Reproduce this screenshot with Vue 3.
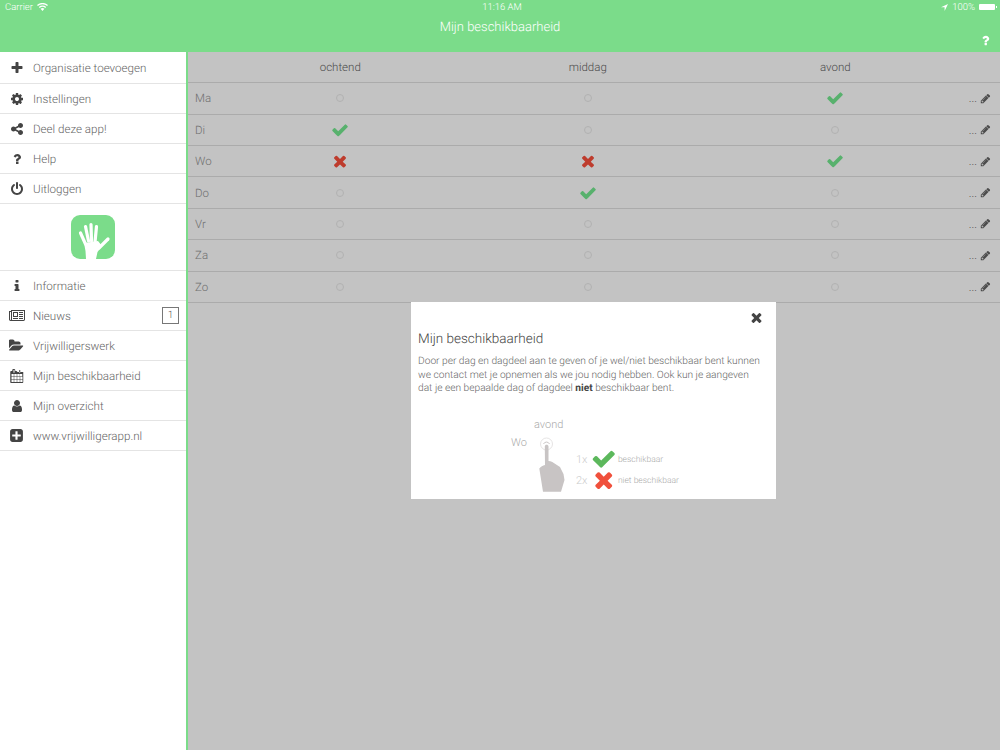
<script setup>
const d = {
  plus: 'M1600 736v192q0 40-28 68t-68 28h-416v416q0 40-28 68t-68 28h-192q-40 0-68-28t-28-68v-416h-416q-40 0-68-28t-28-68v-192q0-40 28-68t68-28h416v-416q0-40 28-68t68-28h192q40 0 68 28t28 68v416h416q40 0 68 28t28 68z',
  cog: 'M1152 896q0-106-75-181t-181-75-181 75-75 181 75 181 181 75 181-75 75-181zm512-109v222q0 12-8 23t-20 13l-185 28q-19 54-39 91 35 50 107 138 10 12 10 25t-9 23q-27 37-99 108t-94 71q-12 0-26-9l-138-108q-44 23-91 38-16 136-29 186-7 28-36 28h-222q-14 0-24.5-8.5t-11.5-21.5l-28-184q-49-16-90-37l-141 107q-10 9-25 9-14 0-25-11-126-114-165-168-7-10-7-23 0-12 8-23 15-21 51-66.5t54-70.5q-27-50-41-99l-183-27q-13-2-21-12.5t-8-23.5v-222q0-12 8-23t19-13l186-28q14-46 39-92-40-57-107-138-10-12-10-24 0-10 9-23 26-36 98.5-107.5t94.5-71.5q13 0 26 10l138 107q44-23 91-38 16-136 29-186 7-28 36-28h222q14 0 24.5 8.5t11.5 21.5l28 184q49 16 90 37l142-107q9-9 24-9 13 0 25 10 129 119 165 170 7 8 7 22 0 12-8 23-15 21-51 66.5t-54 70.5q26 50 41 98l183 28q13 2 21 12.5t8 23.5z',
  share: 'M1344 1024q133 0 226.5 93.5t93.5 226.5-93.5 226.5-226.5 93.5-226.5-93.5-93.5-226.5q0-12 2-34l-360-180q-92 86-218 86-133 0-226.5-93.5t-93.5-226.5 93.5-226.5 226.5-93.5q126 0 218 86l360-180q-2-22-2-34 0-133 93.5-226.5t226.5-93.5 226.5 93.5 93.5 226.5-93.5 226.5-226.5 93.5q-126 0-218-86l-360 180q2 22 2 34t-2 34l360 180q92-86 218-86z',
  question: 'M1088 1256v240q0 16-12 28t-28 12h-240q-16 0-28-12t-12-28v-240q0-16 12-28t28-12h240q16 0 28 12t12 28zm316-600q0 54-15.5 101t-35 76.5-55 59.5-57.5 43.5-61 35.5q-41 23-68.5 65t-27.5 67q0 17-12 32.5t-28 15.5h-240q-15 0-25.5-18.5t-10.5-37.5v-45q0-83 65-156.5t143-108.5q59-27 84-56t25-76q0-42-46.5-74t-107.5-32q-65 0-108 29-35 25-107 115-13 16-31 16-12 0-25-8l-164-125q-13-10-15.5-25t5.5-28q160-266 464-266 80 0 161 31t146 83 106 127.5 41 158.5z',
  power: 'M1664 896q0 156-61 298t-164 245-245 164-298 61-298-61-245-164-164-245-61-298q0-182 80.5-343t226.5-270q43-32 95.5-25t83.5 50q32 42 24.5 94.5t-49.5 84.5q-98 74-151.5 181t-53.5 228q0 104 40.5 198.5t109.5 163.5 163.5 109.5 198.5 40.5 198.5-40.5 163.5-109.5 109.5-163.5 40.5-198.5q0-121-53.5-228t-151.5-181q-42-32-49.5-84.5t24.5-94.5q31-43 84-50t95 25q146 109 226.5 270t80.5 343zm-640-768v640q0 52-38 90t-90 38-90-38-38-90v-640q0-52 38-90t90-38 90 38 38 90z',
  info: 'M1216 1344v128q0 26-19 45t-45 19h-512q-26 0-45-19t-19-45v-128q0-26 19-45t45-19h64v-384h-64q-26 0-45-19t-19-45v-128q0-26 19-45t45-19h384q26 0 45 19t19 45v576h64q26 0 45 19t19 45zm-128-1152v192q0 26-19 45t-45 19h-256q-26 0-45-19t-19-45v-192q0-26 19-45t45-19h256q26 0 45 19t19 45z',
  news: 'M1024 512h-384v384h384v-384zm128 640v128h-640v-128h640zm0-768v640h-640v-640h640zm640 768v128h-512v-128h512zm0-256v128h-512v-128h512zm0-256v128h-512v-128h512zm0-256v128h-512v-128h512zm-1536 960v-960h-128v960q0 26 19 45t45 19 45-19 19-45zm1664 0v-1088h-1536v1088q0 33-11 64h1483q26 0 45-19t19-45zm128-1216v1216q0 80-56 136t-136 56h-1664q-80 0-136-56t-56-136v-1088h256v-128h1792z',
  folder: 'M1815 952q0 31-31 66l-336 396q-43 51-120.5 86.5t-143.5 35.5h-1088q-34 0-60.5-13t-26.5-43q0-31 31-66l336-396q43-51 120.5-86.5t143.5-35.5h1088q34 0 60.5 13t26.5 43zm-343-344v160h-832q-94 0-197 47.5t-164 119.5l-337 396-5 6q0-4-.5-12.5t-.5-12.5v-960q0-92 66-158t158-66h320q92 0 158 66t66 158v32h544q92 0 158 66t66 158z',
  calendar: 'M192 1664h288v-288h-288v288zm352 0h320v-288h-320v288zm-352-352h288v-320h-288v320zm352 0h320v-320h-320v320zm-352-384h288v-288h-288v288zm736 736h320v-288h-320v288zm-384-736h320v-288h-320v288zm768 736h288v-288h-288v288zm-384-352h320v-320h-320v320zm-352-864v-288q0-13-9.5-22.5t-22.5-9.5h-64q-13 0-22.5 9.5t-9.5 22.5v288q0 13 9.5 22.5t22.5 9.5h64q13 0 22.5-9.5t9.5-22.5zm736 864h288v-320h-288v320zm-384-384h320v-288h-320v288zm352 0h288v-288h-288v288zm32-480v-288q0-13-9.5-22.5t-22.5-9.5h-64q-13 0-22.5 9.5t-9.5 22.5v288q0 13 9.5 22.5t22.5 9.5h64q13 0 22.5-9.5t9.5-22.5zm384-64v1280q0 52-38 90t-90 38h-1408q-52 0-90-38t-38-90v-1280q0-52 38-90t90-38h128v-96q0-66 47-113t113-47h64q66 0 113 47t47 113v96h128q52 0 90 38t38 90z',
  user: 'M1536 1399q0 109-62.5 187t-150.5 78h-854q-88 0-150.5-78t-62.5-187q0-85 8.5-160.5t31.5-152 58.5-131 94-89 134.5-34.5q131 128 313 128t313-128q76 0 134.5 34.5t94 89 58.5 131 31.5 152 8.5 160.5zm-256-887q0 159-112.5 271.5t-271.5 112.5-271.5-112.5-112.5-271.5 112.5-271.5 271.5-112.5 271.5 112.5 112.5 271.5z',
  plusSquare: 'M1408 960v-128q0-26-19-45t-45-19h-320v-320q0-26-19-45t-45-19h-128q-26 0-45 19t-19 45v320h-320q-26 0-45 19t-19 45v128q0 26 19 45t45 19h320v320q0 26 19 45t45 19h128q26 0 45-19t19-45v-320h320q26 0 45-19t19-45zm256-544v960q0 119-84.5 203.5t-203.5 84.5h-960q-119 0-203.5-84.5t-84.5-203.5v-960q0-119 84.5-203.5t203.5-84.5h960q119 0 203.5 84.5t84.5 203.5z',
  check: 'M1671 566q0 40-28 68l-724 724-136 136q-28 28-68 28t-68-28l-136-136-362-362q-28-28-28-68t28-68l136-136q28-28 68-28t68 28l294 295 656-657q28-28 68-28t68 28l136 136q28 28 28 68z',
  times: 'M1490 1322q0 40-28 68l-136 136q-28 28-68 28t-68-28l-294-294-294 294q-28 28-68 28t-68-28l-136-136q-28-28-28-68t28-68l294-294-294-294q-28-28-28-68t28-68l136-136q28-28 68-28t68 28l294 294 294-294q28-28 68-28t68 28l136 136q28 28 28 68t-28 68l-294 294 294 294q28 28 28 68z',
  pencil: 'M491 1536l91-91-235-235-91 91v107h128v128h107zm523-928q0-22-22-22-10 0-17 7l-542 542q-7 7-7 17 0 22 22 22 10 0 17-7l542-542q7-7 7-17zm-54-192l416 416-832 832h-416v-416zm683 96q0 53-37 90l-166 166-416-416 166-165q36-38 90-38 53 0 91 38l235 234q37 39 37 91z'
}

const topMenu = [
  { label: 'Organisatie toevoegen', icon: 'plus', size: 14 },
  { label: 'Instellingen', icon: 'cog', size: 14 },
  { label: 'Deel deze app!', icon: 'share', size: 14 },
  { label: 'Help', icon: 'question', size: 14 },
  { label: 'Uitloggen', icon: 'power', size: 14 }
]

const bottomMenu = [
  { label: 'Informatie', icon: 'info', size: 14 },
  { label: 'Nieuws', icon: 'news', size: 16, vb: '0 0 2048 1792', badge: 1 },
  { label: 'Vrijwilligerswerk', icon: 'folder', size: 15, vb: '0 0 1920 1792' },
  { label: 'Mijn beschikbaarheid', icon: 'calendar', size: 14 },
  { label: 'Mijn overzicht', icon: 'user', size: 14 },
  { label: 'www.vrijwilligerapp.nl', icon: 'plusSquare', size: 15 }
]

const days = [
  { name: 'Ma', slots: ['', '', 'yes'] },
  { name: 'Di', slots: ['yes', '', ''] },
  { name: 'Wo', slots: ['no', 'no', 'yes'] },
  { name: 'Do', slots: ['', 'yes', ''] },
  { name: 'Vr', slots: ['', '', ''] },
  { name: 'Za', slots: ['', '', ''] },
  { name: 'Zo', slots: ['', '', ''] }
]
</script>

<template>
  <div class="app">
    <header class="topbar">
      <div class="status">
        <div class="status-left">
          <span>Carrier</span>
          <svg width="11" height="8" viewBox="0 0 11 8"><path d="M5.5 8 3.6 5.8a2.8 2.8 0 0 1 3.8 0zM2.7 4.9 1.8 3.9a5.5 5.5 0 0 1 7.4 0l-.9 1a4.2 4.2 0 0 0-5.6 0zM.9 3 0 2a8.2 8.2 0 0 1 11 0l-.9 1A6.9 6.9 0 0 0 .9 3z" fill="#fff"/></svg>
        </div>
        <span class="clock">11:16 AM</span>
        <div class="status-right">
          <svg width="7" height="7" viewBox="0 0 7 7"><path d="M7 0 0 3.2h3.6V7z" fill="#fff"/></svg>
          <span>100%</span>
          <span class="battery"></span>
        </div>
      </div>
      <div class="title-row">
        <h1>Mijn beschikbaarheid</h1>
        <svg class="help" width="13" height="13" viewBox="0 0 1792 1792"><path :d="d.question" fill="#fff"/></svg>
      </div>
    </header>

    <div class="body">
      <aside class="sidebar">
        <ul class="menu">
          <li v-for="item in topMenu" :key="item.label">
            <span class="menu-icon">
              <svg :width="item.size" :height="item.size" :viewBox="item.vb || '0 0 1792 1792'"><path :d="d[item.icon]" fill="#444"/></svg>
            </span>
            <span>{{ item.label }}</span>
          </li>
        </ul>
        <div class="logo-wrap">
          <svg width="44" height="44" viewBox="0 0 44 44">
            <rect width="44" height="44" rx="9" fill="#7bdc8a"/>
            <g fill="none" stroke="#fff" stroke-width="3.2" stroke-linecap="round">
              <path d="M9.500 18 14.500 29"/>
              <path d="M14.500 11.500 17.500 26"/>
              <path d="M20 9.500 20.500 26"/>
              <path d="M25.500 11.500 24 27"/>
              <path d="M37 24 28 33"/>
            </g>
            <path d="M13 28 27 26 31 31 26.500 37 25 44H15L14.500 36z" fill="#fff"/>
          </svg>
        </div>
        <ul class="menu">
          <li v-for="item in bottomMenu" :key="item.label">
            <span class="menu-icon">
              <svg :width="item.size" :height="item.size" :viewBox="item.vb || '0 0 1792 1792'"><path :d="d[item.icon]" fill="#444"/></svg>
            </span>
            <span>{{ item.label }}</span>
            <span v-if="item.badge" class="badge">{{ item.badge }}</span>
          </li>
        </ul>
      </aside>

      <main class="main">
        <div class="row head">
          <span></span>
          <span class="cell">ochtend</span>
          <span class="cell">middag</span>
          <span class="cell">avond</span>
          <span></span>
        </div>
        <div v-for="day in days" :key="day.name" class="row">
          <span class="day">{{ day.name }}</span>
          <span v-for="(slot, i) in day.slots" :key="i" class="cell">
            <svg v-if="slot === 'yes'" width="18" height="18" viewBox="0 0 1792 1792"><path :d="d.check" fill="#66e685"/></svg>
            <svg v-else-if="slot === 'no'" width="18" height="18" viewBox="0 0 1792 1792"><path :d="d.times" fill="#f83e29"/></svg>
            <span v-else class="empty"></span>
          </span>
          <span class="edit">
            <span>...</span>
            <svg width="11" height="11" viewBox="0 0 1792 1792"><path :d="d.pencil" fill="#555"/></svg>
          </span>
        </div>

        <div class="overlay"></div>

        <section class="modal">
          <div class="modal-close">
            <svg width="15" height="15" viewBox="0 0 1792 1792"><path :d="d.times" fill="#444"/></svg>
          </div>
          <h2>Mijn beschikbaarheid</h2>
          <p>Door per dag en dagdeel aan te geven of je wel/niet beschikbaar bent kunnen we contact met je opnemen als we jou nodig hebben. Ook kun je aangeven dat je een bepaalde dag of dagdeel <strong>niet</strong> beschikbaar bent.</p>
          <div class="legend">
            <div class="legend-finger">
              <span class="legend-avond">avond</span>
              <div class="legend-day">
                <span class="legend-wo">Wo</span>
                <svg width="44" height="66" viewBox="0 0 44 66">
                  <circle cx="16.500" cy="14" r="6" fill="none" stroke="#e6e4e4"/>
                  <path d="M13.500 14a3.300 3.300 0 0 1 6 0" fill="none" stroke="#cbc7c7"/>
                  <path d="M14.800 16.500c0-2.200 3.600-2.200 3.700 0L18.500 31c1.200 .2 2.500 .4 3.800 1l7.700 5 3.500 7 1 6-3.500 11.700H13L9.300 38.500c1.500-2 3.500-3 5.700-3.500z" fill="#c8c4c4"/>
                </svg>
              </div>
            </div>
            <div class="legend-keys">
              <div class="legend-key">
                <span class="times">1x</span>
                <svg width="25.500" height="25.500" viewBox="0 0 1792 1792"><path :d="d.check" fill="#5cb85c"/></svg>
                <span class="key-label">beschikbaar</span>
              </div>
              <div class="legend-key">
                <span class="times">2x</span>
                <svg width="25.500" height="25.500" viewBox="0 0 1792 1792"><path :d="d.times" fill="#f0503c"/></svg>
                <span class="key-label">niet beschikbaar</span>
              </div>
            </div>
          </div>
        </section>
      </main>
    </div>
  </div>
</template>

<style>
html, body {
  margin: 0;
  background: #fff;
}
</style>

<style scoped>
.app {
  width: 1000px;
  height: 750px;
  overflow: hidden;
  display: flex;
  flex-direction: column;
  font-family: Roboto, "Liberation Sans", sans-serif;
  font-weight: 300;
  color: #666;
  text-rendering: geometricPrecision;
}

.topbar {
  height: 52px;
  flex: none;
  background: #7bdc8a;
  color: #fff;
  display: flex;
  flex-direction: column;
}

.status {
  height: 14px;
  padding: 0 5px;
  display: grid;
  grid-template-columns: 1fr auto 1fr;
  align-items: center;
  font-size: 9.500px;
}

.status-left {
  display: flex;
  align-items: center;
  gap: 4px;
}

.clock {
  padding-left: 4px;
}

.status-right {
  display: flex;
  align-items: center;
  justify-content: flex-end;
  gap: 4px;
}

.battery {
  position: relative;
  display: block;
  width: 16px;
  height: 6px;
  background: #fff;
  border-radius: 1px;
}

.battery::after {
  content: "";
  position: absolute;
  right: -2px;
  top: 2px;
  width: 1px;
  height: 2px;
  background: #fff;
}

.title-row {
  flex: 1;
  position: relative;
  display: flex;
  justify-content: center;
}

h1 {
  margin: 6px 0 0;
  font-size: 13px;
  font-weight: 300;
  line-height: 16px;
}

.help {
  position: absolute;
  right: 8.500px;
  bottom: 5.500px;
}

.body {
  flex: 1;
  display: flex;
  min-height: 0;
}

.sidebar {
  width: 186px;
  flex: none;
  background: #fff;
  border-right: 2px solid #7bdc8a;
}

.menu {
  list-style: none;
  margin: 0;
  padding: 0;
}

.menu li {
  height: 29px;
  border-bottom: 1px solid #e4e4e4;
  display: flex;
  align-items: center;
  font-size: 11.600px;
  color: #666;
  padding-right: 7px;
}

.menu:first-child li:first-child {
  height: 30px;
  padding-top: 1px;
}

.menu-icon {
  width: 33px;
  display: flex;
  justify-content: center;
  flex: none;
}

.logo-wrap {
  height: 67px;
  padding-bottom: 1px;
  border-bottom: 1px solid #e4e4e4;
  display: flex;
  justify-content: center;
  align-items: center;
  box-sizing: border-box;
}

.badge {
  margin-left: auto;
  width: 15px;
  height: 15px;
  border: 1px solid #777;
  font-size: 10px;
  display: flex;
  align-items: center;
  justify-content: center;
  color: #555;
}

.main {
  flex: 1;
  position: relative;
  background: #fff;
}

.row {
  display: grid;
  grid-template-columns: 28.500px repeat(3, 247.500px) 1fr;
  align-items: center;
  height: 30.400px;
  border-bottom: 1px solid #ddd;
  font-size: 11.500px;
  color: #888;
}

.head {
  height: 30.200px;
  color: #555;
}

.cell {
  display: flex;
  justify-content: center;
  align-items: center;
}

.day {
  padding-left: 7px;
}

.empty {
  display: block;
  width: 6px;
  height: 6px;
  border: 1px solid #e6e6e6;
  border-radius: 50%;
}

.edit {
  display: flex;
  justify-content: flex-end;
  align-items: center;
  gap: 3px;
  padding-right: 9px;
  color: #555;
}

.overlay {
  position: absolute;
  inset: 0;
  background: rgba(55, 55, 55, 0.3);
}

.modal {
  position: absolute;
  left: 223px;
  top: 250px;
  width: 365px;
  height: 197px;
  box-sizing: border-box;
  padding: 8px 7px 0;
  background: #fff;
  overflow: hidden;
}

.modal-close {
  display: flex;
  justify-content: flex-end;
  padding-right: 5px;
  height: 15px;
}

h2 {
  margin: 6px 0 0;
  font-size: 13.500px;
  font-weight: 300;
  line-height: 16px;
  color: #444;
}

p {
  margin: 8px 0 0;
  max-width: 346px;
  font-size: 10.200px;
  line-height: 13.500px;
  color: #666;
}

strong {
  color: #444;
  font-weight: 700;
}

.legend {
  display: flex;
  margin-top: 23px;
  padding-left: 93px;
}

.legend-finger {
  display: flex;
  flex-direction: column;
  color: #aaa;
  font-size: 11px;
}

.legend-avond {
  padding-left: 23px;
  line-height: 12px;
}

.legend-day {
  display: flex;
  gap: 3px;
  margin-top: -1px;
}

.legend-wo {
  margin-top: 6px;
}

.legend-keys {
  display: flex;
  flex-direction: column;
  margin: 30px 0 0 2px;
}

.legend-key {
  display: flex;
  align-items: center;
  height: 21px;
  color: #aaa;
}

.times {
  width: 15.500px;
  font-size: 11px;
  color: #ccc;
}

.key-label {
  font-size: 8.500px;
  margin-left: 1px;
  padding-top: 2px;
}
</style>
